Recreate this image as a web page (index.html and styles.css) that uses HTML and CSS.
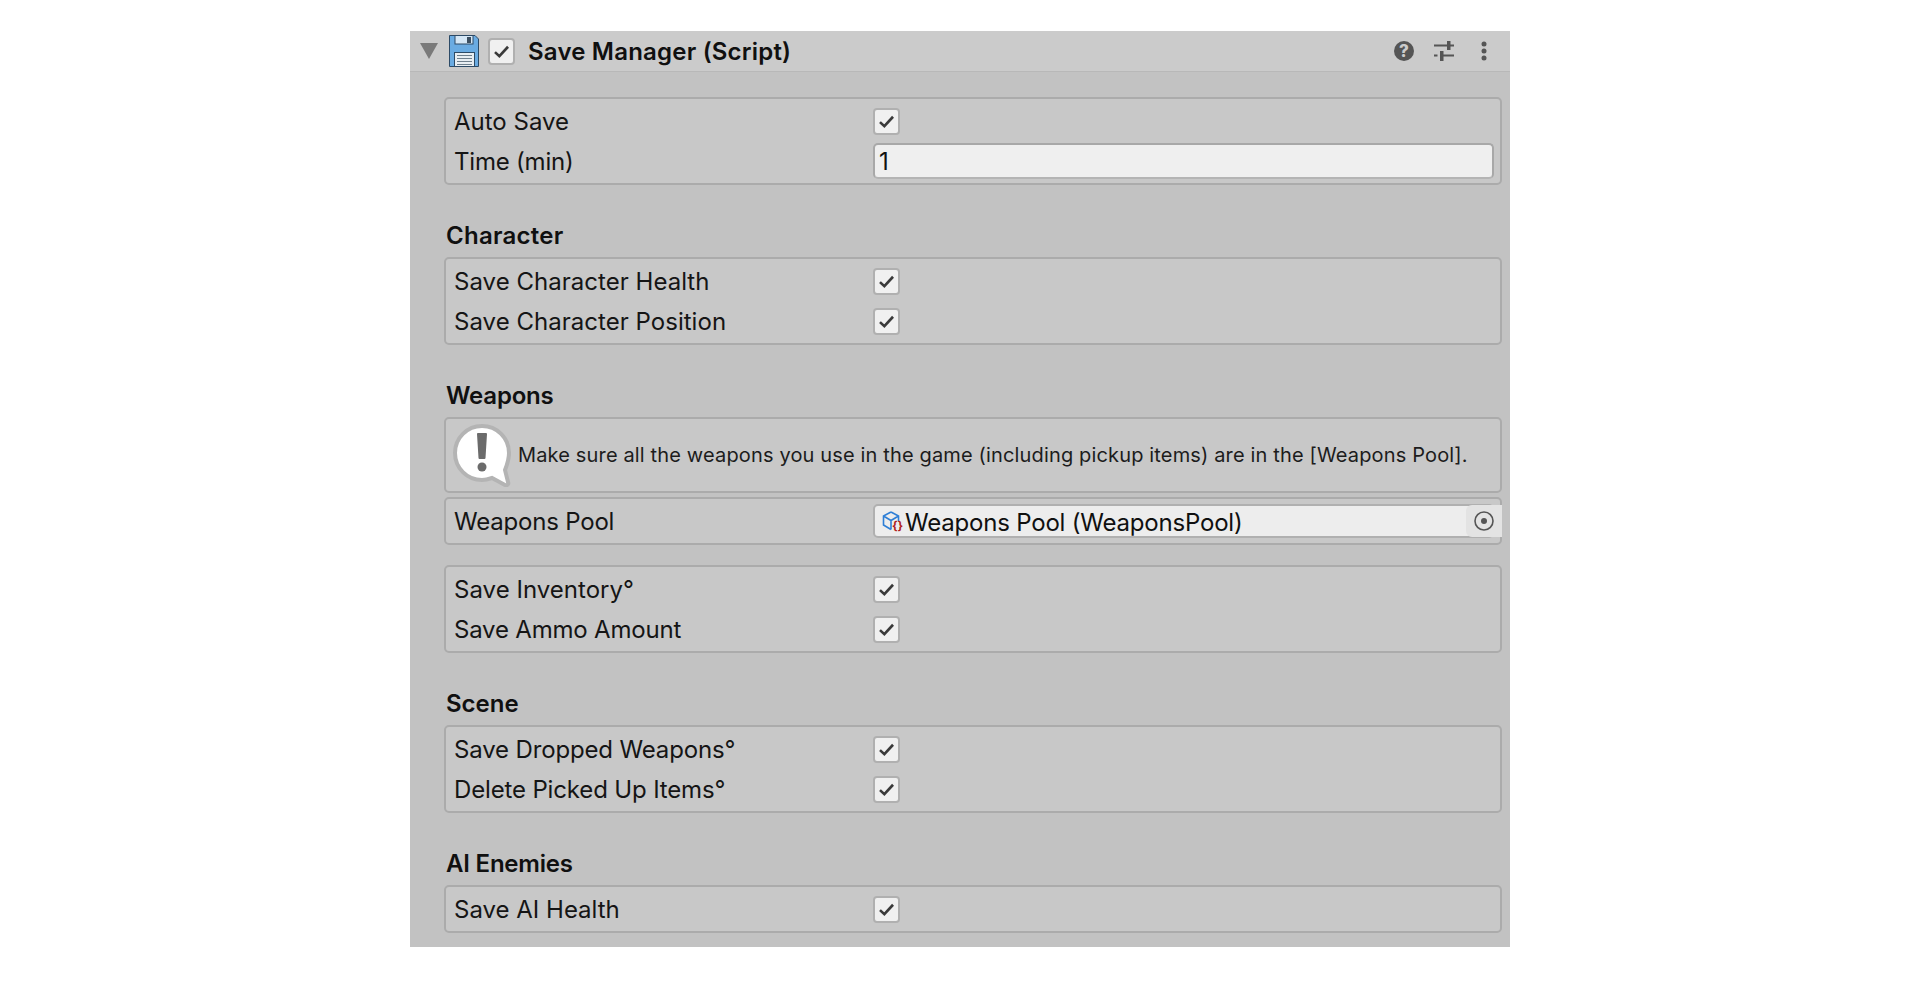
FILE: index.html
```html
<!DOCTYPE html>
<html lang="en">
<head>
<meta charset="utf-8">
<title>Save Manager (Script)</title>
<link rel="stylesheet" href="styles.css">
</head>
<body>
<main class="inspector">
  <header class="comp-header">
    <svg class="foldout" viewBox="0 0 18 16"><path d="M0 0H18L9 16Z"/></svg>
    <svg class="floppy" viewBox="0 0 30 32">
      <path d="M0.500 0.500H26L29.500 4V31.500H0.500Z" fill="#6aabe2" stroke="#2c4a66"/>
      <rect x="6" y="0.500" width="18" height="8.500" fill="#d5e7f6" stroke="#2c4a66"/>
      <rect x="18" y="2" width="4" height="6" fill="#3b4e60"/>
      <rect x="5.500" y="17.500" width="20" height="14" fill="#e8eef3" stroke="#2c4a66"/>
      <path d="M8 20.500H23M8 23.500H23M8 26.500H23M8 29.500H23" stroke="#6f7f8c" fill="none"/>
    </svg>
    <span class="check"><svg viewBox="0 0 16 16"><path d="M2.500 8.500L6.200 12L13.500 4"/></svg></span>
    <h1 class="comp-title">Save Manager (Script)</h1>
    <div class="comp-tools">
      <svg class="tool" viewBox="0 0 20 20"><circle cx="10" cy="10" r="10" fill="#555"/><text x="10" y="16" class="help-mark">?</text></svg>
      <svg class="tool" viewBox="0 0 20 20"><path d="M0 4.500H20M0 14.500H3.500M8 14.500H20" stroke="#555" stroke-width="2" fill="none"/><path d="M13 0H16.500V9H13ZM6 10H9.500V20H6Z" fill="#555"/></svg>
      <svg class="tool" viewBox="0 0 20 20"><circle cx="10" cy="3" r="2.500" fill="#555"/><circle cx="10" cy="10" r="2.500" fill="#555"/><circle cx="10" cy="17" r="2.500" fill="#555"/></svg>
    </div>
  </header>

  <div class="content">
    <section class="box">
      <div class="row"><span class="label">Auto Save</span><span class="check"><svg viewBox="0 0 16 16"><path d="M2.500 8.500L6.200 12L13.500 4"/></svg></span></div>
      <div class="row"><span class="label narrow">Time (min)</span><span class="field">1</span></div>
    </section>

    <h2 class="heading wide">Character</h2>
    <section class="box">
      <div class="row"><span class="label loose">Save Character Health</span><span class="check"><svg viewBox="0 0 16 16"><path d="M2.500 8.500L6.200 12L13.500 4"/></svg></span></div>
      <div class="row"><span class="label loose">Save Character Position</span><span class="check"><svg viewBox="0 0 16 16"><path d="M2.500 8.500L6.200 12L13.500 4"/></svg></span></div>
    </section>

    <h2 class="heading narrow">Weapons</h2>
    <section class="box help">
      <svg class="help-icon" viewBox="0 0 60 64">
        <path d="M30 3C15 3 3 15 3 30C3 45 15 57 30 57C34 57 37 56 40 55L53 62C55 63 57 61 56 59L53 47C55 42 57 36 57 30C57 15 45 3 30 3Z" fill="#fff" stroke="#b4b4b4" stroke-width="4"/>
        <path d="M26 11H34L32.500 35H27.500Z" fill="#6b6b6b" stroke="#6b6b6b" stroke-linejoin="round" stroke-width="2"/>
        <circle cx="30" cy="44" r="4.500" fill="#6b6b6b"/>
      </svg>
      <p class="help-text">Make sure all the weapons you use in the game (including pickup items) are in the [Weapons Pool].</p>
    </section>
    <section class="box pool">
      <div class="row"><span class="label narrow">Weapons Pool</span>
        <div class="object-field">
          <svg class="script-icon" viewBox="0 0 21 21">
            <path d="M9 1L16.500 5V10M9 1L1.500 5V14L9 18.500M1.500 5L9 9.500L16.500 5M9 9.500V18.500" fill="none" stroke="#2f7fd6" stroke-width="1.600"/>
            <text x="15.500" y="18.500" class="brace">{}</text>
          </svg>
          <span class="object-name">Weapons Pool (WeaponsPool)</span>
          <span class="picker"><svg viewBox="0 0 20 20"><circle cx="10" cy="10" r="9" fill="none" stroke="#555" stroke-width="1.600"/><circle cx="10" cy="10" r="3" fill="#555"/></svg></span>
        </div>
      </div>
    </section>

    <section class="box gap">
      <div class="row"><span class="label loose">Save Inventory°</span><span class="check"><svg viewBox="0 0 16 16"><path d="M2.500 8.500L6.200 12L13.500 4"/></svg></span></div>
      <div class="row"><span class="label narrow">Save Ammo Amount</span><span class="check"><svg viewBox="0 0 16 16"><path d="M2.500 8.500L6.200 12L13.500 4"/></svg></span></div>
    </section>

    <h2 class="heading">Scene</h2>
    <section class="box">
      <div class="row"><span class="label slight">Save Dropped Weapons°</span><span class="check"><svg viewBox="0 0 16 16"><path d="M2.500 8.500L6.200 12L13.500 4"/></svg></span></div>
      <div class="row"><span class="label slight">Delete Picked Up Items°</span><span class="check"><svg viewBox="0 0 16 16"><path d="M2.500 8.500L6.200 12L13.500 4"/></svg></span></div>
    </section>

    <h2 class="heading narrow">AI Enemies</h2>
    <section class="box single">
      <div class="row"><span class="label">Save AI Health</span><span class="check"><svg viewBox="0 0 16 16"><path d="M2.500 8.500L6.200 12L13.500 4"/></svg></span></div>
    </section>
  </div>
</main>
</body>
</html>
```
FILE: styles.css
```css
* { box-sizing: border-box; }
html, body { margin: 0; height: 100%; background: #fff; }
body { font-family: Inter, "Liberation Sans", sans-serif; color: #101010; padding: 31px 0 0 410px; overflow: hidden; }
.inspector { width: 1100px; height: 916px; background: #c2c2c2; }
.comp-header { height: 41px; background: #cbcbcb; border-bottom: 1px solid #b8b8b8; display: flex; align-items: center; padding: 0 16px 0 10px; }
.foldout { width: 18px; height: 16px; fill: #7a7a7a; margin-right: 11px; flex: none; }
.floppy { width: 30px; height: 32px; margin-right: 9px; flex: none; }
.check { width: 27px; height: 27px; flex: none; background: #f0f0f0; border: 2px solid #b0b0b0; border-radius: 4px; display: flex; align-items: center; justify-content: center; }
.check svg { width: 19px; height: 19px; fill: none; stroke: #3a3a3a; stroke-width: 2.2; }
.comp-title { margin: 2px 0 0 13px; font-size: 24px; font-weight: 600; line-height: 30px; letter-spacing: .2px; color: #101010; }
.comp-tools { margin-left: auto; display: flex; gap: 20px; align-items: center; }
.tool { width: 20px; height: 20px; display: block; }
.help-mark { font: 800 17px Inter, sans-serif; fill: #cbcbcb; text-anchor: middle; }
.content { padding: 25px 8px 0 34px; }
.box { background: #c8c8c8; border: 2px solid #ababab; border-radius: 5px; padding: 2px 6px 2px 8px; height: 88px; }
.row { display: flex; align-items: center; height: 40px; }
.label { width: 419px; flex: none; font-size: 24px; line-height: 30px; margin-top: 2px; color: #151515; }
.narrow { letter-spacing: -.2px; }
.slight { letter-spacing: -.15px; }
.loose { letter-spacing: .03px; }
.wide { letter-spacing: .25px; }
.field { flex: 1; height: 36px; background: #efefef; border: 2px solid #a8a8a8; border-bottom-color: #b4b4b4; border-radius: 5px; font-size: 24px; line-height: 34px; padding-left: 4px; color: #111; }
.heading { margin: 36px 0 6px 2px; font-size: 24px; font-weight: 600; line-height: 30px; color: #101010; }
.help { height: 76px; display: flex; align-items: center; padding: 0 0 0 6px; }
.help-icon { width: 60px; height: 64px; flex: none; margin-right: 6px; }
.help-text { margin: 0; font-size: 20px; line-height: 26px; color: #1c1c1c; letter-spacing: .15px; white-space: nowrap; }
.pool { height: 48px; margin-top: 4px; }
.gap { margin-top: 20px; }
.object-field { flex: 1; height: 34px; background: #ededed; border: 2px solid #b0b0b0; border-radius: 5px; display: flex; align-items: center; padding-left: 7px; position: relative; }
.script-icon { width: 21px; height: 21px; flex: none; overflow: visible; }
.brace { font: 700 12px Inter, sans-serif; fill: #b01c1c; text-anchor: middle; }
.object-name { font-size: 24px; letter-spacing: -.2px; color: #101010; margin: 2px 0 0 2px; white-space: nowrap; }
.picker { position: absolute; right: -10px; top: -1px; width: 36px; height: 32px; background: #e3e3e3; border-radius: 6px 0 0 6px; display: flex; align-items: center; justify-content: center; }
.picker svg { width: 20px; height: 20px; }
.single { height: 48px; }
```
